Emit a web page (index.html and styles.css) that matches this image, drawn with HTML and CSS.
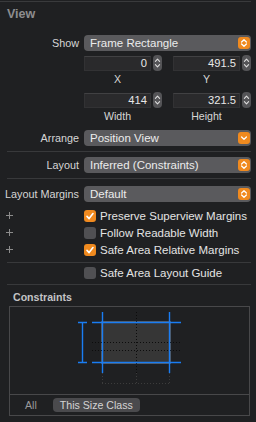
FILE: index.html
```html
<!DOCTYPE html>
<html lang="en">

<head>
    <meta charset="UTF-8">
    <meta name="viewport" content="width=device-width, initial-scale=1.0">
    <title>Size Inspector</title>
    <link rel="stylesheet" href="styles.css">
</head>

<body>
    <div class="inspector">
        <div class="top-rule"></div>
        <h2 class="section-title">View</h2>

        <!-- Show -->
        <div class="row row-show">
            <span class="row-label">Show</span>
            <div class="popup">
                <span class="popup-text">Frame Rectangle</span>
                <span class="popup-badge">
                    <svg width="12" height="12" viewBox="0 0 12 12"><path d="M3.6 5 L6 2.7 L8.4 5 M3.6 7 L6 9.3 L8.4 7" fill="none" stroke="#fff" stroke-width="1.3" stroke-linecap="round" stroke-linejoin="round"/></svg>
                </span>
            </div>
        </div>

        <!-- X / Y -->
        <div class="row row-coords first">
            <span class="row-label"></span>
            <div class="coords">
                <div class="coord">
                    <div class="coord-input">
                        <div class="field">0</div>
                        <div class="stepper"><svg width="9" height="16" viewBox="0 0 9 16"><path d="M2.4 6.3 L4.5 4.2 L6.6 6.3 M2.4 9.7 L4.5 11.8 L6.6 9.7" fill="none" stroke="#dedede" stroke-width="1.1" stroke-linecap="round" stroke-linejoin="round"/></svg></div>
                    </div>
                    <div class="coord-caption">X</div>
                </div>
                <div class="coord">
                    <div class="coord-input">
                        <div class="field">491.5</div>
                        <div class="stepper"><svg width="9" height="16" viewBox="0 0 9 16"><path d="M2.4 6.3 L4.5 4.2 L6.6 6.3 M2.4 9.7 L4.5 11.8 L6.6 9.7" fill="none" stroke="#dedede" stroke-width="1.1" stroke-linecap="round" stroke-linejoin="round"/></svg></div>
                    </div>
                    <div class="coord-caption">Y</div>
                </div>
            </div>
        </div>

        <!-- Width / Height -->
        <div class="row row-coords second">
            <span class="row-label"></span>
            <div class="coords">
                <div class="coord">
                    <div class="coord-input">
                        <div class="field">414</div>
                        <div class="stepper"><svg width="9" height="16" viewBox="0 0 9 16"><path d="M2.4 6.3 L4.5 4.2 L6.6 6.3 M2.4 9.7 L4.5 11.8 L6.6 9.7" fill="none" stroke="#dedede" stroke-width="1.1" stroke-linecap="round" stroke-linejoin="round"/></svg></div>
                    </div>
                    <div class="coord-caption">Width</div>
                </div>
                <div class="coord">
                    <div class="coord-input">
                        <div class="field">321.5</div>
                        <div class="stepper"><svg width="9" height="16" viewBox="0 0 9 16"><path d="M2.4 6.3 L4.5 4.2 L6.6 6.3 M2.4 9.7 L4.5 11.8 L6.6 9.7" fill="none" stroke="#dedede" stroke-width="1.1" stroke-linecap="round" stroke-linejoin="round"/></svg></div>
                    </div>
                    <div class="coord-caption">Height</div>
                </div>
            </div>
        </div>

        <!-- Arrange -->
        <div class="row row-arrange">
            <span class="row-label">Arrange</span>
            <div class="popup">
                <span class="popup-text">Position View</span>
                <span class="popup-badge">
                    <svg width="12" height="12" viewBox="0 0 12 12"><path d="M3.6 5 L6 7.4 L8.4 5" fill="none" stroke="#fff" stroke-width="1.3" stroke-linecap="round" stroke-linejoin="round"/></svg>
                </span>
            </div>
        </div>

        <div class="rule rule-a"></div>

        <!-- Layout -->
        <div class="row row-layout">
            <span class="row-label">Layout</span>
            <div class="popup">
                <span class="popup-text">Inferred (Constraints)</span>
                <span class="popup-badge">
                    <svg width="12" height="12" viewBox="0 0 12 12"><path d="M3.6 5 L6 2.7 L8.4 5 M3.6 7 L6 9.3 L8.4 7" fill="none" stroke="#fff" stroke-width="1.3" stroke-linecap="round" stroke-linejoin="round"/></svg>
                </span>
            </div>
        </div>

        <div class="rule rule-b"></div>

        <!-- Layout Margins -->
        <div class="row row-margins">
            <span class="row-label">Layout Margins</span>
            <div class="popup">
                <span class="popup-text">Default</span>
                <span class="popup-badge">
                    <svg width="12" height="12" viewBox="0 0 12 12"><path d="M3.6 5 L6 2.7 L8.4 5 M3.6 7 L6 9.3 L8.4 7" fill="none" stroke="#fff" stroke-width="1.3" stroke-linecap="round" stroke-linejoin="round"/></svg>
                </span>
            </div>
        </div>

        <div class="checks">
            <div class="row check-row">
                <span class="row-label plus-cell"><svg width="7" height="7" viewBox="0 0 7 7"><path d="M3.5 0 V7 M0 3.5 H7" stroke="#8c8c8c" stroke-width="1"/></svg></span>
                <span class="checkbox on"><svg width="12" height="12" viewBox="0 0 12 12"><path d="M3 6.4 L5.1 8.6 L9 3.6" fill="none" stroke="#fff" stroke-width="1.6" stroke-linecap="round" stroke-linejoin="round"/></svg></span>
                <span class="check-text">Preserve Superview Margins</span>
            </div>
            <div class="row check-row">
                <span class="row-label plus-cell"><svg width="7" height="7" viewBox="0 0 7 7"><path d="M3.5 0 V7 M0 3.5 H7" stroke="#8c8c8c" stroke-width="1"/></svg></span>
                <span class="checkbox"></span>
                <span class="check-text">Follow Readable Width</span>
            </div>
            <div class="row check-row">
                <span class="row-label plus-cell"><svg width="7" height="7" viewBox="0 0 7 7"><path d="M3.5 0 V7 M0 3.5 H7" stroke="#8c8c8c" stroke-width="1"/></svg></span>
                <span class="checkbox on"><svg width="12" height="12" viewBox="0 0 12 12"><path d="M3 6.4 L5.1 8.6 L9 3.6" fill="none" stroke="#fff" stroke-width="1.6" stroke-linecap="round" stroke-linejoin="round"/></svg></span>
                <span class="check-text">Safe Area Relative Margins</span>
            </div>
        </div>

        <div class="rule rule-c"></div>

        <div class="row check-row guide-row">
            <span class="row-label"></span>
            <span class="checkbox"></span>
            <span class="check-text">Safe Area Layout Guide</span>
        </div>

        <div class="rule rule-d"></div>

        <h3 class="box-title">Constraints</h3>
        <div class="constraints-box">
            <svg class="diagram" width="239" height="87" viewBox="0 0 239 87">
                <rect x="92" y="15" width="68" height="41" fill="#363636" stroke="#565656" stroke-width="2"/>
                <g stroke-dasharray="1 2" stroke-width="1">
                    <path d="M126.5 5 V66" stroke="#0c0c0c"/>
                    <path d="M82 35.5 H171 M82 43.5 H171" stroke="#0c0c0c"/>
                    <path d="M126.5 66 V77 M92.5 66 V77 M159.5 66 V77 M92 76.5 H160" stroke="#3c3c3c"/>
                </g>
                <g stroke="#1a7df3" stroke-width="1.4" fill="none">
                    <path d="M92.5 5 V66 M159.5 5 V66"/>
                    <path d="M82 15.5 H171 M82 55.5 H171"/>
                    <path d="M72.5 15.5 V55.5 M68 15.5 H77 M68 55.5 H77"/>
                </g>
            </svg>
            <div class="box-footer">
                <span class="tab">All</span>
                <span class="tab tab-active">This Size Class</span>
            </div>
        </div>
    </div>
</body>

</html>
```

FILE: styles.css
```css
/* Base */
* {
    padding: 0;
    margin: 0;
    box-sizing: border-box;
}

body {
    background-color: #1f2022;
    font-family: "Liberation Sans", Arial, sans-serif;
    color: #d8d8d8;
}

.inspector {
    width: 256px;
    padding-right: 5px;
}

.top-rule {
    height: 1px;
    margin-top: 1px;
    background-color: #393a3c;
}

.section-title {
    height: 24px;
    line-height: 24px;
    padding-left: 7px;
    font-size: 12.5px;
    font-weight: bold;
    color: #8d8d8f;
}

/* Rows: label column + control */
.row {
    display: flex;
    align-items: center;
    gap: 5px;
}

.row-label {
    width: 79px;
    flex-shrink: 0;
    text-align: right;
    font-size: 10.8px;
    color: #d6d6d6;
}

.row-show {
    margin-top: 9px;
}

.row-arrange {
    margin-top: 6px;
}

.row-layout {
    margin-top: 5px;
}

.row-margins {
    margin-top: 7px;
}

.row-margins .row-label {
    text-align: left;
    padding-left: 5px;
    white-space: nowrap;
}

/* Popup buttons */
.popup {
    flex: 1;
    height: 16px;
    display: flex;
    align-items: center;
    justify-content: space-between;
    background-color: #5a5a5d;
    border-radius: 4px;
    padding: 0 1px 0 6px;
}

.popup-text {
    font-size: 11.5px;
    color: #ececec;
}

.popup-badge {
    width: 12px;
    height: 12px;
    border-radius: 3px;
    background-color: #f08a1f;
    display: flex;
}

/* Number fields */
.row-coords {
    align-items: flex-start;
}

.row-coords.first {
    margin-top: 4px;
}

.row-coords.second {
    margin-top: 5px;
}

.coords {
    flex: 1;
    display: flex;
    gap: 11px;
}

.coord {
    flex: 1;
}

.coord-input {
    display: flex;
    gap: 2px;
    height: 16px;
}

.field {
    flex: 1;
    height: 15px;
    margin-top: 1px;
    background-color: #2a2a2c;
    border: 1px solid #323234;
    border-top-color: #414143;
    text-align: right;
    padding-right: 3px;
    font-size: 11.2px;
    line-height: 13px;
    color: #e8e8e8;
}

.stepper {
    width: 9px;
    height: 16px;
    border-radius: 4px;
    background-color: #545457;
    display: flex;
}

.coord-caption {
    margin-right: 11px;
    height: 16px;
    line-height: 16px;
    text-align: center;
    font-size: 10.6px;
    color: #d6d6d6;
}

/* Separators */
.rule {
    height: 1px;
    margin-left: 7px;
    background-color: #38393b;
}

.rule-a {
    margin-top: 5px;
}

.rule-b {
    margin-top: 5px;
}

.rule-c {
    margin-top: 4px;
}

.rule-d {
    margin-top: 3px;
}

/* Checkboxes */
.checks {
    margin-top: 5px;
}

.check-row {
    height: 17px;
    gap: 0;
}

.check-row .row-label {
    margin-right: 5px;
}

.plus-cell {
    text-align: left;
    padding-left: 6px;
    display: flex;
}

.checkbox {
    width: 12px;
    height: 12px;
    border-radius: 3px;
    background-color: #505053;
    display: flex;
}

.checkbox.on {
    background-color: #f08a1f;
}

.check-text {
    margin-left: 4px;
    font-size: 11.5px;
    color: #e4e4e4;
    white-space: nowrap;
}

.guide-row {
    margin-top: 1px;
}

/* Constraints box */
.box-title {
    margin-top: 3px;
    height: 18px;
    line-height: 18px;
    padding-left: 13px;
    font-size: 10.6px;
    font-weight: bold;
    color: #c4c4c6;
}

.constraints-box {
    margin-left: 9px;
    width: 241px;
    border: 1px solid #48484a;
}

.diagram {
    display: block;
}

.box-footer {
    height: 21px;
    border-top: 1px solid #48484a;
    display: flex;
    align-items: center;
    padding-left: 15px;
    gap: 16px;
}

.tab {
    font-size: 10.6px;
    color: #9a9a9c;
}

.tab-active {
    height: 14px;
    line-height: 14px;
    padding: 0 7px;
    border-radius: 4px;
    background-color: #4a4a4d;
    color: #d4d4d4;
}
```
